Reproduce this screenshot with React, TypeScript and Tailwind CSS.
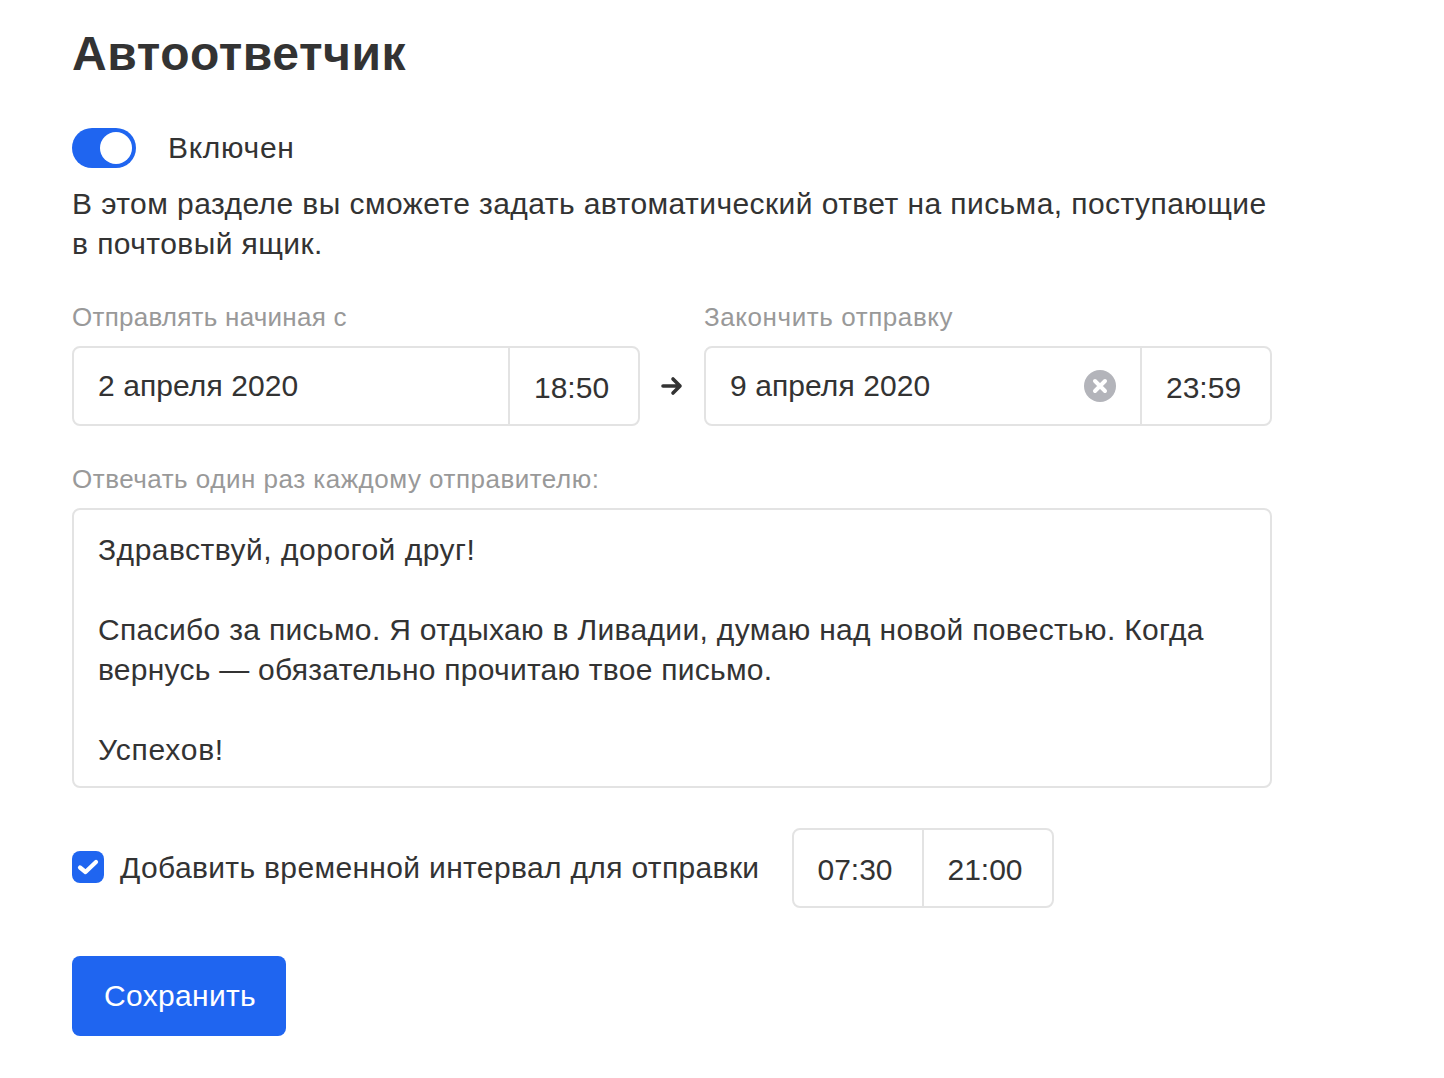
export default function App() {
  return (
    <div className="w-[1444px] h-[1078px] bg-white pl-[72px] text-[#333333] text-[30px] leading-[40px] overflow-hidden" style={{ fontFamily: '"Liberation Sans", Arial, sans-serif' }}>
      <div className="w-[1200px]">
        <h1 className="text-[48px] leading-[56px] font-bold pt-[26px] tracking-[0.58px]">Автоответчик</h1>
        <div className="flex items-center gap-[32px] mt-[46px] h-[40px]">
          <div className="w-[64px] h-[40px] rounded-full bg-[#1f65f0] flex items-center justify-end pr-[4px]">
            <div className="w-[32px] h-[32px] rounded-full bg-white" />
          </div>
          <span className="tracking-[0.7px]">Включен</span>
        </div>
        <p className="mt-[16px] tracking-[0.43px]">В этом разделе вы сможете задать автоматический ответ на письма, поступающие<br />в почтовый ящик.</p>
        <div className="flex items-end mt-[33px]">
          <div className="w-[568px]">
            <div className="text-[26px] leading-[40px] text-[#999999] mb-[9px] tracking-[0.25px]">Отправлять начиная с</div>
            <div className="flex h-[80px] border-2 border-[#e3e3e3] rounded-[8px]">
              <div className="flex-1 flex items-center pl-[24px] tracking-[0.08px]">2 апреля 2020</div>
              <div className="w-[130px] border-l-2 border-[#e3e3e3] flex items-center pl-[24px] pt-[4px]">18:50</div>
            </div>
          </div>
          <div className="w-[64px] h-[80px] flex items-center justify-center">
            <svg width="22" height="20" viewBox="0 0 22 20" fill="none" stroke="#333333" strokeWidth="3.6" strokeLinecap="round" strokeLinejoin="round">
              <path d="M2 10H19M12 3l7 7-7 7" />
            </svg>
          </div>
          <div className="w-[568px]">
            <div className="text-[26px] leading-[40px] text-[#999999] mb-[9px] tracking-[0.58px]">Закончить отправку</div>
            <div className="flex h-[80px] border-2 border-[#e3e3e3] rounded-[8px]">
              <div className="flex-1 flex items-center justify-between pl-[24px] pr-[24px]">
                <span className="tracking-[0.08px]">9 апреля 2020</span>
                <svg width="32" height="32" viewBox="0 0 32 32">
                  <circle cx="16" cy="16" r="16" fill="#b3b4ba" />
                  <path d="M11 11l10 10M21 11L11 21" stroke="#ffffff" strokeWidth="4" strokeLinecap="round" />
                </svg>
              </div>
              <div className="w-[130px] border-l-2 border-[#e3e3e3] flex items-center pl-[24px] pt-[4px]">23:59</div>
            </div>
          </div>
        </div>
        <div className="text-[26px] leading-[40px] text-[#999999] mt-[33px] mb-[9px] tracking-[0.5px]">Отвечать один раз каждому отправителю:</div>
        <div className="h-[280px] border-2 border-[#e3e3e3] rounded-[8px] px-[24px] pt-[20px]">
          <p className="tracking-[0.5px]">Здравствуй, дорогой друг!</p>
          <p className="mt-[40px] tracking-[0.33px]">Спасибо за письмо. Я отдыхаю в Ливадии, думаю над новой повестью. Когда<br /><span className="tracking-[0.26px]">вернусь — обязательно прочитаю твое письмо.</span></p>
          <p className="mt-[40px] tracking-[0.75px]">Успехов!</p>
        </div>
        <div className="flex items-center mt-[40px]">
          <div className="w-[32px] h-[32px] mb-[2px] rounded-[8px] bg-[#1f65f0] flex items-center justify-center">
            <svg width="22" height="18" viewBox="0 0 22 18" fill="none" stroke="#ffffff" strokeWidth="4.2" strokeLinecap="round" strokeLinejoin="round">
              <path d="M3 9.5l5.5 4.5L19 4" />
            </svg>
          </div>
          <span className="ml-[16px] tracking-[0.35px]">Добавить временной интервал для отправки</span>
          <div className="flex h-[80px] ml-[33px] border-2 border-[#e3e3e3] rounded-[8px]">
            <div className="w-[128px] flex items-center pl-[23px] pt-[4px]">07:30</div>
            <div className="w-[130px] border-l-2 border-[#e3e3e3] flex items-center pl-[23px] pt-[4px]">21:00</div>
          </div>
        </div>
        <button className="block mt-[48px] w-[214px] h-[80px] rounded-[8px] bg-[#1f65f0] text-white tracking-[0.33px] pl-[2px]">Сохранить</button>
      </div>
    </div>
  );
}
